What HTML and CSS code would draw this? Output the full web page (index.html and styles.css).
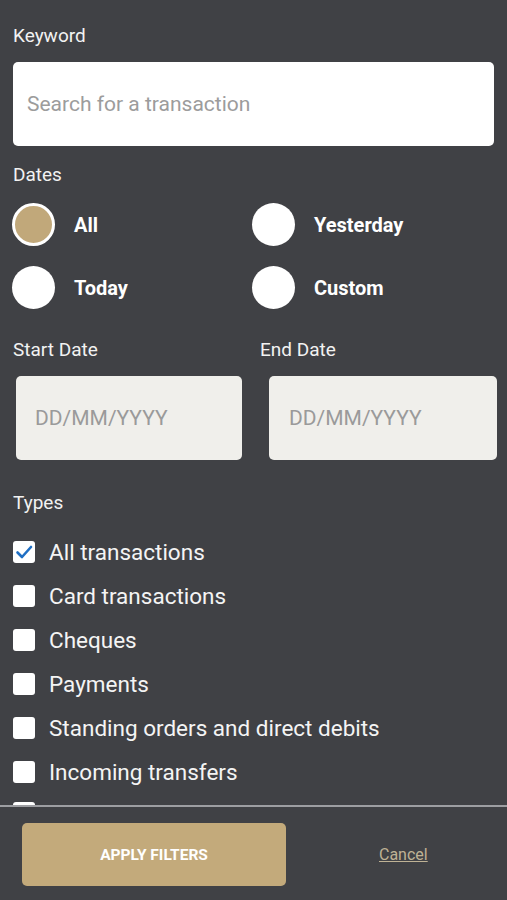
FILE: index.html
```html
<!DOCTYPE html>
<html>
<head>
<meta charset="utf-8">
<link rel="stylesheet" href="styles.css">
</head>
<body>
<div class="screen">
  <div class="scroll">
    <div class="label label-keyword">Keyword</div>
    <div class="search">Search for a transaction</div>

    <div class="label label-dates">Dates</div>
    <div class="radios">
      <div class="radio-item"><span class="radio selected"></span><span class="radio-text">All</span></div>
      <div class="radio-item"><span class="radio"></span><span class="radio-text">Yesterday</span></div>
      <div class="radio-item"><span class="radio"></span><span class="radio-text">Today</span></div>
      <div class="radio-item"><span class="radio"></span><span class="radio-text">Custom</span></div>
    </div>

    <div class="dates">
      <div class="date-col">
        <div class="label">Start Date</div>
        <div class="date-box start">DD/MM/YYYY</div>
      </div>
      <div class="date-col">
        <div class="label">End Date</div>
        <div class="date-box end">DD/MM/YYYY</div>
      </div>
    </div>

    <div class="label label-types">Types</div>
    <div class="checks">
      <div class="check-item"><span class="check checked"><svg viewBox="0 0 22 22" width="22" height="22"><path d="M4.5 11.5 L9 16 L18 6" fill="none" stroke="#1f6fc4" stroke-width="2.6" stroke-linecap="round" stroke-linejoin="round"/></svg></span><span class="check-text">All transactions</span></div>
      <div class="check-item"><span class="check"></span><span class="check-text">Card transactions</span></div>
      <div class="check-item"><span class="check"></span><span class="check-text">Cheques</span></div>
      <div class="check-item"><span class="check"></span><span class="check-text">Payments</span></div>
      <div class="check-item"><span class="check"></span><span class="check-text">Standing orders and direct debits</span></div>
      <div class="check-item"><span class="check"></span><span class="check-text">Incoming transfers</span></div>
      <div class="check-item peek"><span class="check"></span></div>
    </div>
  </div>
  <div class="footer">
    <button class="apply">APPLY FILTERS</button>
    <a class="cancel">Cancel</a>
  </div>
</div>
</body>
</html>
```
FILE: styles.css
```css
html, body {
  margin: 0;
  padding: 0;
  background: #404145;
}
body {
  font-family: Roboto, "Noto Sans", sans-serif;
  color: #ffffff;
}
.screen {
  width: 507px;
  height: 900px;
  display: flex;
  flex-direction: column;
}
.scroll {
  height: 805px;
  overflow: hidden;
  padding: 0 13px;
  box-sizing: border-box;
}
.label {
  font-size: 19px;
  line-height: 22px;
  color: #f2f2f2;
}
.label-keyword {
  margin-top: 25px;
}
.search {
  margin-top: 15px;
  height: 84px;
  width: 481px;
  background: #ffffff;
  border-radius: 5px;
  box-sizing: border-box;
  padding-left: 14px;
  display: flex;
  align-items: center;
  font-size: 21px;
  color: #9c9c9c;
}
.label-dates {
  margin-top: 18px;
}
.radios {
  margin-top: 17px;
  display: grid;
  grid-template-columns: 240px 1fr;
  row-gap: 20px;
}
.radio-item {
  display: flex;
  align-items: center;
  margin-left: -1px;
}
.radio {
  width: 43px;
  height: 43px;
  border-radius: 50%;
  background: #ffffff;
  box-sizing: border-box;
  flex: none;
}
.radio.selected {
  background: #c1a87a;
  border: 3px solid #ffffff;
}
.radio-text {
  margin-left: 19px;
  font-size: 20px;
  font-weight: 700;
  color: #ffffff;
}
.dates {
  margin-top: 30px;
  display: grid;
  grid-template-columns: 247px 1fr;
}
.date-box {
  margin-top: 15px;
  height: 84px;
  background: #f0efeb;
  border-radius: 5px;
  display: flex;
  align-items: center;
  font-size: 21px;
  color: #9a9a9a;
  box-sizing: border-box;
  padding-left: 19px;
}
.date-box.start {
  margin-left: 3px;
  width: 226px;
}
.date-box.end {
  margin-left: 9px;
  width: 228px;
  padding-left: 20px;
}
.label-types {
  margin-top: 32px;
}
.checks {
  margin-top: 27px;
  display: flex;
  flex-direction: column;
  gap: 22px;
}
.check-item {
  display: flex;
  align-items: center;
  height: 22px;
}
.check-item.peek {
  margin-top: -3px;
}
.check {
  width: 22px;
  height: 22px;
  background: #ffffff;
  border-radius: 3px;
  flex: none;
  display: flex;
}
.check-text {
  margin-left: 14px;
  font-size: 22.5px;
  color: #f4f4f4;
}
.footer {
  border-top: 2px solid #9d9ea2;
  flex: 1;
  display: flex;
  align-items: center;
  padding-left: 22px;
}
.apply {
  width: 264px;
  height: 63px;
  background: #c3aa7b;
  border: none;
  border-radius: 5px;
  color: #ffffff;
  font-family: Roboto, sans-serif;
  font-weight: 700;
  font-size: 15.5px;
  margin-top: 2px;
}
.cancel {
  margin-left: 93px;
  font-size: 16px;
  color: #bfb295;
  text-decoration: underline;
  margin-top: 2px;
}
```
